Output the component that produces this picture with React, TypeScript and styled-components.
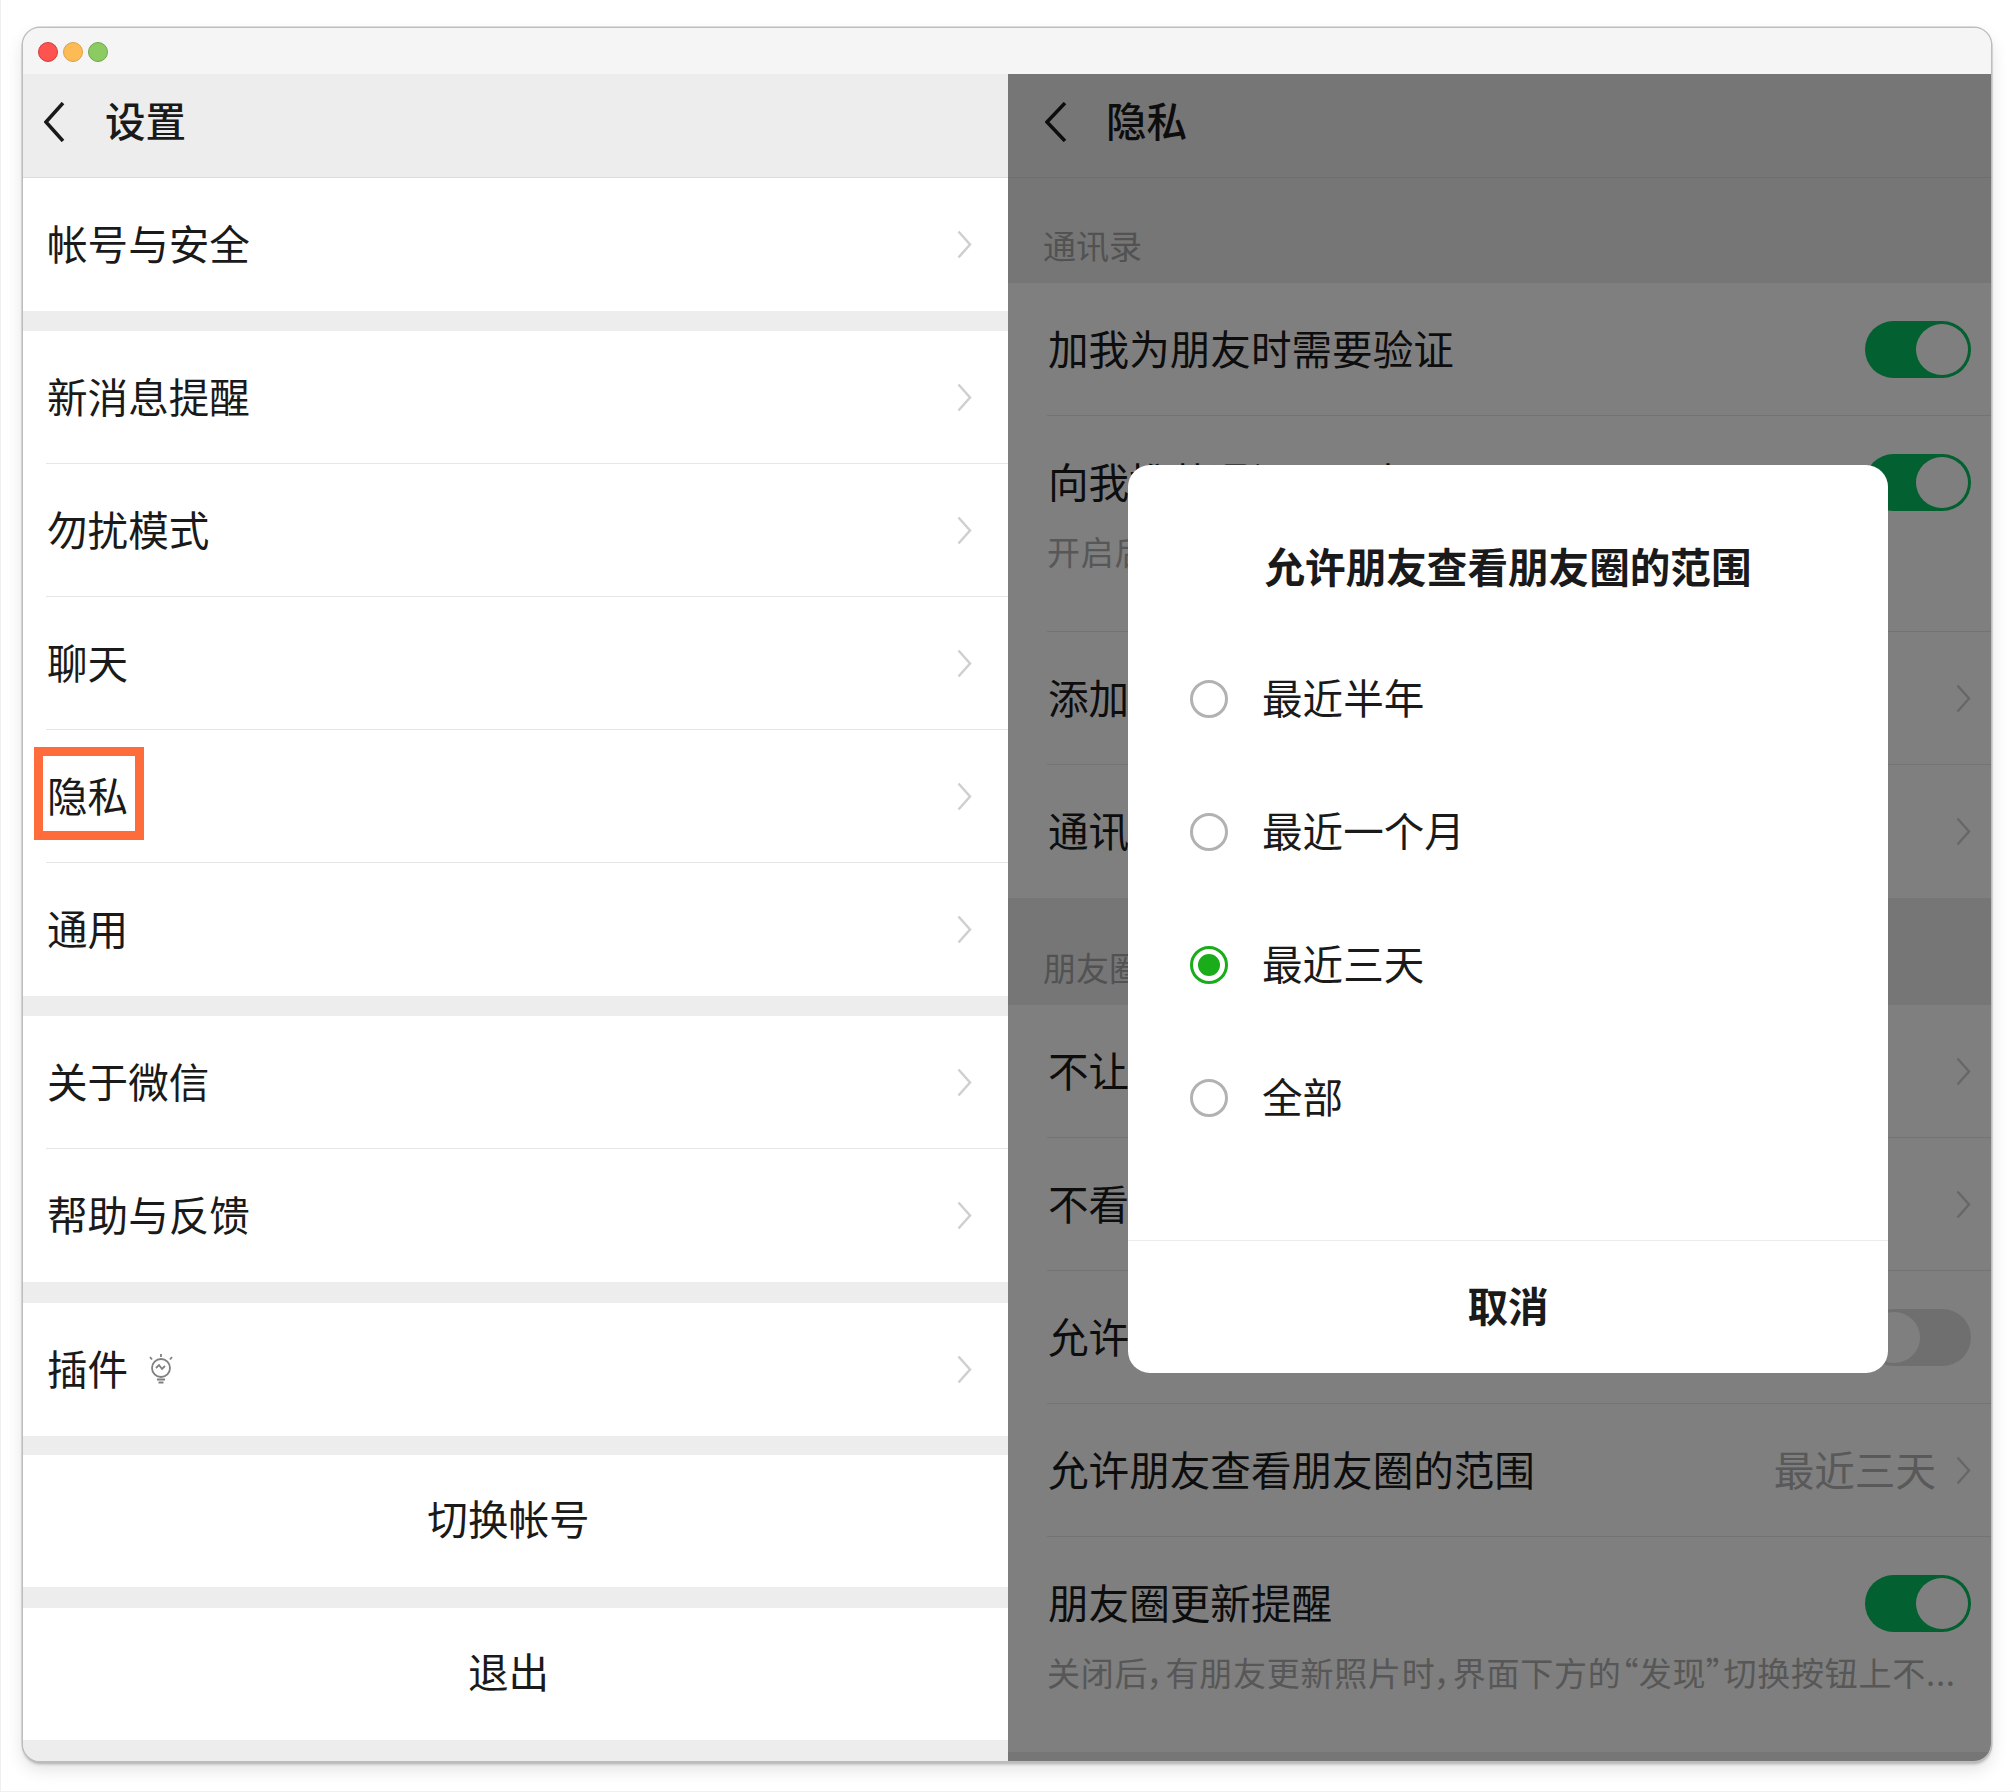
import React, { ReactElement } from "react";
import styled, { createGlobalStyle } from "styled-components";

const GlobalStyle = createGlobalStyle`
  html, body {
    margin: 0;
    padding: 0;
    background: #fff;
  }

  body {
    font-family: "Noto Sans CJK SC", "Noto Sans", sans-serif;
    color: #1a1a1a;
  }
`;

const Page = styled.div`
  box-sizing: border-box;
  width: 2014px;
  height: 1792px;
  padding: 28px 0 0 22px;
  border: 1px solid #f0f0f0;
  border-width: 0 0 1px 1px;
`;

const AppWindow = styled.div`
  display: flex;
  flex-direction: column;
  width: 1968px;
  height: 1733px;
  border-radius: 17px;
  overflow: hidden;
  background: #ededed;
  box-shadow:
    0 0 0 1.5px #bdbdbd,
    0 3px 3px rgba(0, 0, 0, 0.25),
    0 8px 18px rgba(0, 0, 0, 0.12);
`;

const TitleBar = styled.div`
  display: flex;
  flex: none;
  align-items: center;
  gap: 5px;
  box-sizing: border-box;
  height: 46px;
  padding: 2px 0 0 15px;
  background: #f5f5f5;
`;

const Light = styled.span<{ $fill: string; $edge: string }>`
  box-sizing: border-box;
  width: 20px;
  height: 20px;
  border-radius: 50%;
  background: ${(p) => p.$fill};
  border: 1px solid ${(p) => p.$edge};
`;

const Panes = styled.div`
  display: grid;
  flex: 1;
  grid-template-columns: 985px 983px;
  min-height: 0;
`;

const Pane = styled.section`
  position: relative;
  display: flex;
  flex-direction: column;
  overflow: hidden;
  background: #ededed;
`;

const Header = styled.header<{ $gap: number; $left: number }>`
  display: flex;
  flex: none;
  align-items: center;
  box-sizing: border-box;
  gap: ${(p) => p.$gap}px;
  height: 104px;
  padding: 0 0 8px ${(p) => p.$left}px;
  border-bottom: 1px solid #dcdcdc;
  font-size: 40.6px;
  font-weight: 500;
  line-height: 1;
`;

const HeaderTitle = styled.span`
  padding-bottom: 3px;
`;

const Group = styled.div<{ $gap?: number }>`
  flex: none;
  margin-bottom: ${(p) => p.$gap ?? 0}px;
  background: #fff;
`;

const Row = styled.div<{ $inset: number }>`
  padding-left: ${(p) => p.$inset}px;
  background: #fff;
`;

const RowBody = styled.div<{ $end: number; $tall?: boolean }>`
  display: flex;
  box-sizing: border-box;
  align-items: ${(p) => (p.$tall ? "flex-start" : "center")};
  justify-content: space-between;
  height: ${(p) => (p.$tall ? "auto" : "133px")};
  padding-right: ${(p) => p.$end}px;
  padding-top: ${(p) => (p.$tall ? "36px" : "0")};
  border-bottom: 1px solid #e6e6e6;
  font-size: 40.6px;
  line-height: 58px;

  ${Row}:last-child > & {
    border-bottom: 0;
  }
`;

const Label = styled.span`
  position: relative;
  display: inline-flex;
  align-items: center;
  padding: 0 0 3px 1px;
  white-space: nowrap;
`;

const Highlight = styled.span`
  position: absolute;
  top: -19px;
  left: -12px;
  width: 110px;
  height: 93px;
  box-sizing: border-box;
  border: 9px solid #ff6c3c;
`;

const Bulb = styled.svg`
  width: 26px;
  height: 31px;
  margin-left: 20px;
`;

const Chevron = styled.svg<{ $color: string }>`
  flex: none;
  width: 15px;
  height: 29px;
  fill: none;
  stroke: ${(p) => p.$color};
  stroke-width: 2.5;
`;

const BackArrow = styled.svg<{ $w: number }>`
  flex: none;
  width: ${(p) => p.$w}px;
  height: 40px;
  fill: none;
  stroke: #1a1a1a;
  stroke-width: 3.5;
`;

const CenterRow = styled.div`
  display: flex;
  align-items: center;
  justify-content: center;
  box-sizing: border-box;
  height: 132px;
  padding: 0 14px 5px 0;
  font-size: 40.6px;
  line-height: 1;
`;

const SectionTitle = styled.div<{ $height: number }>`
  display: flex;
  flex: none;
  align-items: flex-end;
  box-sizing: border-box;
  height: ${(p) => p.$height}px;
  padding: 0 0 16px 35px;
  color: #a4a4a4;
  font-size: 33px;
  line-height: 44px;
`;

const Trailing = styled.span`
  display: flex;
  align-items: center;
  gap: 20px;
  color: #b2b2b2;
`;

const TrailingText = styled.span`
  padding-bottom: 3px;
`;

const Sub = styled.div`
  margin-top: 16px;
  padding-bottom: 58px;
  color: #aeaeae;
  font-size: 33px;
  line-height: 44px;
  letter-spacing: 0.75px;
  white-space: nowrap;
  font-feature-settings: "palt";
`;

const TallText = styled.div`
  min-width: 0;
`;

const Toggle = styled.span<{ $on: boolean }>`
  position: relative;
  flex: none;
  display: block;
  width: 106px;
  height: 57px;
  border-radius: 29px;
  background: ${(p) => (p.$on ? "#07c160" : "#dfdfdf")};

  &::after {
    content: "";
    position: absolute;
    top: 3px;
    left: ${(p) => (p.$on ? "51px" : "3px")};
    width: 52px;
    height: 51px;
    border-radius: 50%;
    background: #fff;
  }
`;

const TallToggle = styled(Toggle)`
  margin-top: 2px;
`;

const Dim = styled.div`
  position: absolute;
  inset: 0;
  background: rgba(0, 0, 0, 0.5);
`;

const Dialog = styled.div`
  position: absolute;
  top: 391px;
  left: 120px;
  display: flex;
  flex-direction: column;
  width: 760px;
  height: 908px;
  border-radius: 22px;
  background: #fff;
`;

const DialogTitle = styled.h2`
  margin: 0;
  padding: 61px 0 26px;
  font-size: 40.6px;
  font-weight: 700;
  line-height: 80px;
  text-align: center;
`;

const Options = styled.div`
  flex: 1;
`;

const Option = styled.div`
  display: flex;
  align-items: center;
  gap: 34px;
  height: 133px;
  padding-left: 62px;
  font-size: 40.6px;
`;

const OptionText = styled.span`
  padding-bottom: 5px;
`;

const Radio = styled.span<{ $checked?: boolean }>`
  display: flex;
  flex: none;
  align-items: center;
  justify-content: center;
  box-sizing: border-box;
  width: 38px;
  height: 38px;
  border: 3px solid ${(p) => (p.$checked ? "#1aad19" : "#b2b2b2")};
  border-radius: 50%;

  &::after {
    content: "";
    display: ${(p) => (p.$checked ? "block" : "none")};
    width: 22px;
    height: 22px;
    border-radius: 50%;
    background: #1aad19;
  }
`;

const DialogFooter = styled.div`
  display: flex;
  align-items: center;
  justify-content: center;
  box-sizing: border-box;
  height: 133px;
  padding-bottom: 5px;
  border-top: 1px solid #ececec;
  font-size: 40.6px;
  font-weight: 700;
`;

function ChevronIcon({ color = "#cfcfcf" }: { color?: string }): ReactElement {
  return (
    <Chevron $color={color} viewBox="0 0 15 29">
      <path d="M1.5 1.5 13 14.5 1.5 27.5" />
    </Chevron>
  );
}

function BackIcon({ width }: { width: number }): ReactElement {
  return (
    <BackArrow $w={width} viewBox={`0 0 ${width} 40`}>
      <path d={`M${width - 2} 1 2 20 ${width - 2} 39`} />
    </BackArrow>
  );
}

function SettingRow({ label, extra }: { label: string; extra?: ReactElement }): ReactElement {
  return (
    <Row $inset={23}>
      <RowBody $end={36}>
        <Label>
          {label}
          {extra}
        </Label>
        <ChevronIcon />
      </RowBody>
    </Row>
  );
}

function PrivacyRow({ label, trailing }: { label: string; trailing: ReactElement }): ReactElement {
  return (
    <Row $inset={39}>
      <RowBody $end={20}>
        <Label>{label}</Label>
        {trailing}
      </RowBody>
    </Row>
  );
}

function PrivacyTallRow({ label, note }: { label: string; note: string }): ReactElement {
  return (
    <Row $inset={39}>
      <RowBody $end={20} $tall>
        <TallText>
          <Label>{label}</Label>
          <Sub>{note}</Sub>
        </TallText>
        <TallToggle $on />
      </RowBody>
    </Row>
  );
}

const rangeOptions = ["最近半年", "最近一个月", "最近三天", "全部"];

export default function App(): ReactElement {
  return (
    <Page>
      <GlobalStyle />
      <AppWindow>
        <TitleBar>
          <Light $fill="#ff5350" $edge="#c93f3c" />
          <Light $fill="#fdbb55" $edge="#d9a04a" />
          <Light $fill="#8ccb62" $edge="#6fa64d" />
        </TitleBar>
        <Panes>
          <Pane>
            <Header $gap={40} $left={21}>
              <BackIcon width={21} />
              <HeaderTitle>设置</HeaderTitle>
            </Header>
            <Group $gap={20}>
              <SettingRow label="帐号与安全" />
            </Group>
            <Group $gap={20}>
              <SettingRow label="新消息提醒" />
              <SettingRow label="勿扰模式" />
              <SettingRow label="聊天" />
              <SettingRow label="隐私" extra={<Highlight />} />
              <SettingRow label="通用" />
            </Group>
            <Group $gap={21}>
              <SettingRow label="关于微信" />
              <SettingRow label="帮助与反馈" />
            </Group>
            <Group $gap={19}>
              <SettingRow
                label="插件"
                extra={
                  <Bulb viewBox="0 0 26 31" fill="none" stroke="#808080" strokeWidth="1.8">
                    <circle cx="13" cy="15" r="9" />
                    <path d="M13 1v3M2 4l2 2.500M24 4l-2 2.500M8 15l3-3 3 4 3-3M9 26.500h8M10.500 29.500h5" />
                  </Bulb>
                }
              />
            </Group>
            <Group $gap={21}>
              <CenterRow>切换帐号</CenterRow>
            </Group>
            <Group>
              <CenterRow>退出</CenterRow>
            </Group>
          </Pane>
          <Pane>
            <Header $gap={39} $left={37}>
              <BackIcon width={22} />
              <HeaderTitle>隐私</HeaderTitle>
            </Header>
            <SectionTitle $height={105}>通讯录</SectionTitle>
            <Group>
              <PrivacyRow label="加我为朋友时需要验证" trailing={<Toggle $on />} />
              <PrivacyTallRow label="向我推荐通讯录朋友" note="开启后，为你推荐已经开通微信的手机联系人" />
              <PrivacyRow label="添加我的方式" trailing={<ChevronIcon />} />
              <PrivacyRow label="通讯录黑名单" trailing={<ChevronIcon />} />
            </Group>
            <SectionTitle $height={107}>朋友圈</SectionTitle>
            <Group>
              <PrivacyRow label="不让他（她）看" trailing={<ChevronIcon />} />
              <PrivacyRow label="不看他（她）" trailing={<ChevronIcon />} />
              <PrivacyRow label="允许陌生人查看十条朋友圈" trailing={<Toggle $on={false} />} />
              <PrivacyRow
                label="允许朋友查看朋友圈的范围"
                trailing={
                  <Trailing>
                    <TrailingText>最近三天</TrailingText>
                    <ChevronIcon />
                  </Trailing>
                }
              />
              <PrivacyTallRow
                label="朋友圈更新提醒"
                note="关闭后，有朋友更新照片时，界面下方的“发现”切换按钮上不..."
              />
            </Group>
            <Dim />
            <Dialog>
              <DialogTitle>允许朋友查看朋友圈的范围</DialogTitle>
              <Options>
                {rangeOptions.map((option) => (
                  <Option key={option}>
                    <Radio $checked={option === "最近三天"} />
                    <OptionText>{option}</OptionText>
                  </Option>
                ))}
              </Options>
              <DialogFooter>取消</DialogFooter>
            </Dialog>
          </Pane>
        </Panes>
      </AppWindow>
    </Page>
  );
}
